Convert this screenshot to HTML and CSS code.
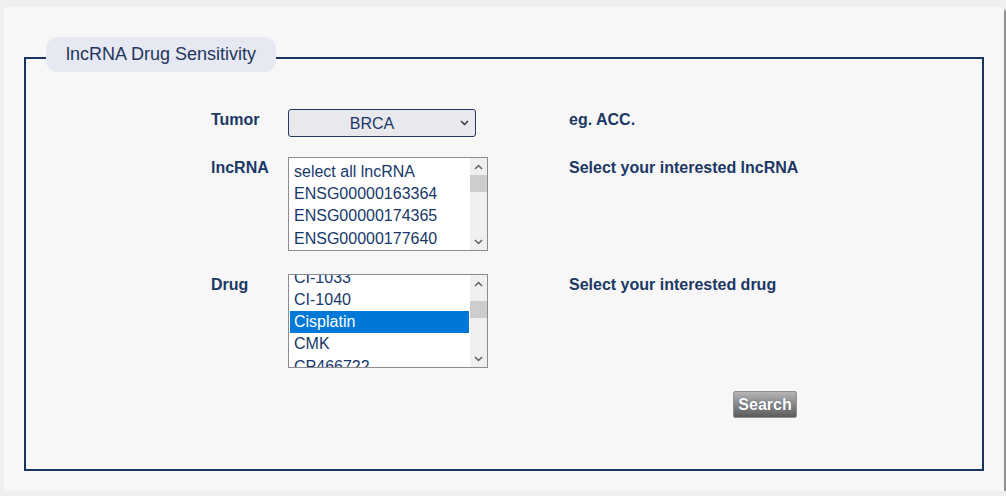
FILE: index.html
```html
<!DOCTYPE html>
<html lang="en">
<head>
    <meta charset="UTF-8">
    <meta name="viewport" content="width=device-width, initial-scale=1.0">
    <title>lncRNA Drug Sensitivity</title>
    <link rel="stylesheet" href="styles.css">
</head>
<body>
    <div class="panel">
        <fieldset class="search-box">
            <legend><span class="legend-pill">lncRNA Drug Sensitivity</span></legend>

            <form class="search-form" onsubmit="return false;">
                <!-- Tumor -->
                <div class="form-row row-tumor">
                    <label class="field-label" for="tumor">Tumor</label>
                    <div>
                        <select id="tumor" class="tumor-select">
                            <option>ACC</option>
                            <option>BLCA</option>
                            <option selected>BRCA</option>
                            <option>CESC</option>
                            <option>COAD</option>
                            <option>HNSC</option>
                            <option>KIRC</option>
                            <option>LUAD</option>
                        </select>
                    </div>
                    <p class="hint">eg. ACC.</p>
                </div>

                <!-- lncRNA -->
                <div class="form-row">
                    <label class="field-label" for="lncrna">lncRNA</label>
                    <div class="listbox-wrap">
                        <select id="lncrna" class="listbox" multiple size="4">
                            <option>select all lncRNA</option>
                            <option>ENSG00000163364</option>
                            <option>ENSG00000174365</option>
                            <option>ENSG00000177640</option>
                            <option>ENSG00000179818</option>
                            <option>ENSG00000196756</option>
                            <option>ENSG00000203875</option>
                            <option>ENSG00000204308</option>
                            <option>ENSG00000214548</option>
                            <option>ENSG00000215386</option>
                            <option>ENSG00000224078</option>
                            <option>ENSG00000225783</option>
                            <option>ENSG00000226950</option>
                            <option>ENSG00000228630</option>
                            <option>ENSG00000229807</option>
                            <option>ENSG00000230590</option>
                            <option>ENSG00000231412</option>
                            <option>ENSG00000234741</option>
                            <option>ENSG00000236824</option>
                            <option>ENSG00000245532</option>
                            <option>ENSG00000247556</option>
                            <option>ENSG00000251562</option>
                            <option>ENSG00000253352</option>
                            <option>ENSG00000255717</option>
                            <option>ENSG00000259976</option>
                            <option>ENSG00000260032</option>
                            <option>ENSG00000261026</option>
                            <option>ENSG00000267080</option>
                            <option>ENSG00000269821</option>
                            <option>ENSG00000270141</option>
                        </select>
                        <div class="scrollbar">
                            <span class="scroll-btn up"></span>
                            <span class="scroll-track"><span class="scroll-thumb"></span></span>
                            <span class="scroll-btn down"></span>
                        </div>
                    </div>
                    <p class="hint">Select your interested lncRNA</p>
                </div>

                <!-- Drug -->
                <div class="form-row">
                    <label class="field-label" for="drug">Drug</label>
                    <div class="listbox-wrap">
                        <select id="drug" class="listbox" multiple size="4">
                            <option>select all drug</option>
                            <option>AZD8055</option>
                            <option>Bexarotene</option>
                            <option>BI-2536</option>
                            <option>Bleomycin</option>
                            <option>Bortezomib</option>
                            <option>Bosutinib</option>
                            <option>Camptothecin</option>
                            <option>CEP-701</option>
                            <option>CHIR-99021</option>
                            <option>CI-1033</option>
                            <option>CI-1040</option>
                            <option selected>Cisplatin</option>
                            <option>CMK</option>
                            <option>CP466722</option>
                            <option>CP724714</option>
                            <option>Cyclopamine</option>
                            <option>Cytarabine</option>
                            <option>Dasatinib</option>
                            <option>DMOG</option>
                            <option>Docetaxel</option>
                            <option>Doxorubicin</option>
                            <option>Elesclomol</option>
                            <option>Embelin</option>
                            <option>Epothilone B</option>
                            <option>Erlotinib</option>
                            <option>Etoposide</option>
                            <option>Gefitinib</option>
                            <option>Gemcitabine</option>
                            <option>Imatinib</option>
                            <option>Lapatinib</option>
                            <option>Lenalidomide</option>
                            <option>Metformin</option>
                            <option>Methotrexate</option>
                            <option>Midostaurin</option>
                            <option>Mitomycin C</option>
                            <option>Nilotinib</option>
                            <option>Nutlin-3a</option>
                            <option>Paclitaxel</option>
                            <option>Pazopanib</option>
                            <option>Rapamycin</option>
                            <option>Roscovitine</option>
                            <option>Shikonin</option>
                            <option>Sorafenib</option>
                            <option>Sunitinib</option>
                            <option>Temsirolimus</option>
                            <option>Vinblastine</option>
                            <option>Vinorelbine</option>
                            <option>Vorinostat</option>
                            <option>ZM-447439</option>
                        </select>
                        <div class="scrollbar">
                            <span class="scroll-btn up"></span>
                            <span class="scroll-track"><span class="scroll-thumb"></span></span>
                            <span class="scroll-btn down"></span>
                        </div>
                    </div>
                    <p class="hint">Select your interested drug</p>
                </div>

                <div class="form-row row-submit">
                    <button type="submit" class="search-btn">Search</button>
                </div>
            </form>
        </fieldset>
    </div>

    <script>
        // Scrollbar next to each list follows the list's scroll position
        function syncThumb(list) {
            const track = list.parentElement.querySelector('.scroll-track');
            const thumb = track.querySelector('.scroll-thumb');
            const range = list.scrollHeight - list.clientHeight;
            const room = track.clientHeight - thumb.offsetHeight;
            const top = range > 0 ? Math.round(list.scrollTop / range * room) : 0;
            thumb.style.marginTop = top + 'px';
        }

        const lists = document.querySelectorAll('.listbox');

        lists.forEach((list) => {
            list.addEventListener('scroll', () => syncThumb(list));
        });

        window.addEventListener('load', () => {
            // keep the chosen drug on the third visible row
            document.getElementById('drug').scrollTop = 233;
            lists.forEach(syncThumb);
        });
    </script>
</body>
</html>
```

FILE: styles.css
```css
body {
    margin: 0;
    padding: 7px 2px 0 4px;
    background-color: #efefef;
    font-family: "Liberation Sans", Arial, sans-serif;
    color: #1b3864;
}

.panel {
    width: 960px;
    padding: 30px 20px 20px 20px;
    background-color: #f7f7f7;
    box-shadow: 3px 3px 2px #8e8e8e;
}

/* Fieldset box */
.search-box {
    margin: 0;
    padding: 30px 20px 51px 20px;
    border: 2px solid #1b3563;
}

.search-box legend {
    padding: 0 0 7px 0;
}

.legend-pill {
    display: block;
    padding: 0 20px;
    height: 35px;
    line-height: 35px;
    background-color: #e6e9f1;
    border-radius: 12px;
    font-size: 18px;
    color: #1f3560;
}

.search-form {
    width: 586px;
    margin: 0 auto;
}

.form-row {
    display: grid;
    grid-template-columns: 77px 281px 1fr;
    align-items: start;
    margin-bottom: 23px;
}

.row-tumor {
    margin-bottom: 20px;
}

.row-submit {
    margin-bottom: 0;
    display: flex;
    justify-content: flex-end;
}

.field-label {
    padding-top: 2px;
    font-size: 16px;
    font-weight: bold;
    color: #1b3864;
}

.hint {
    margin: 0;
    padding-top: 2px;
    font-size: 16px;
    font-weight: bold;
    color: #1b3864;
    white-space: nowrap;
}

/* Tumor dropdown */
.tumor-select {
    -webkit-appearance: none;
    appearance: none;
    width: 188px;
    height: 28px;
    padding: 0 20px 0 0;
    border: 1px solid #24395f;
    border-radius: 3px;
    background-color: #e9e9ed;
    background-image: url("data:image/svg+xml,%3Csvg xmlns='http://www.w3.org/2000/svg' width='9' height='6' viewBox='0 0 9 6'%3E%3Cpath d='M1 1l3.5 3.5L8 1' fill='none' stroke='%23303030' stroke-width='1.4'/%3E%3C/svg%3E");
    background-repeat: no-repeat;
    background-position: right 6px center;
    font-family: "Liberation Sans", Arial, sans-serif;
    font-size: 16px;
    color: #17386a;
    text-align-last: center;
}

/* Multi-select lists */
.listbox-wrap {
    display: flex;
    width: 198px;
    height: 92px;
    border: 1px solid #8b8b93;
    background-color: #fff;
}

.listbox {
    display: block;
    width: 181px;
    height: 92px;
    padding: 3px 1px 1px 1px;
    border: none;
    background-color: #fff;
    font-family: "Liberation Sans", Arial, sans-serif;
    font-size: 16px;
    color: #17386a;
    outline: none;
    scrollbar-width: none;
}

.listbox option {
    padding: 2px 5px 1px 4px;
    color: #17386a;
}

.listbox option:checked {
    background: #0078d7 linear-gradient(#0078d7, #0078d7);
    color: #fff;
}

.scrollbar {
    display: flex;
    flex-direction: column;
    width: 17px;
    background-color: #f0f0f0;
}

.scroll-btn {
    height: 17px;
    flex: none;
    background-repeat: no-repeat;
    background-position: center;
}

.scroll-btn.up {
    background-image: url("data:image/svg+xml,%3Csvg xmlns='http://www.w3.org/2000/svg' width='9' height='6' viewBox='0 0 9 6'%3E%3Cpath d='M1 5l3.5-3.5L8 5' fill='none' stroke='%23606060' stroke-width='1.5'/%3E%3C/svg%3E");
}

.scroll-btn.down {
    background-image: url("data:image/svg+xml,%3Csvg xmlns='http://www.w3.org/2000/svg' width='9' height='6' viewBox='0 0 9 6'%3E%3Cpath d='M1 1l3.5 3.5L8 1' fill='none' stroke='%23606060' stroke-width='1.5'/%3E%3C/svg%3E");
}

.scroll-track {
    flex: 1;
    display: flex;
    flex-direction: column;
}

.scroll-thumb {
    height: 17px;
    flex: none;
    background-color: #cdcdcd;
}

/* Search button */
.search-btn {
    width: 64px;
    height: 27px;
    padding: 0;
    border: 1px solid #8f8f8f;
    border-radius: 2px;
    background: linear-gradient(#b4b4b4, #5b5b5b);
    font-family: "Liberation Sans", Arial, sans-serif;
    font-size: 16px;
    font-weight: bold;
    color: #fff;
    text-shadow: 0 0 1px #3a4a6a;
    cursor: pointer;
}

.search-btn:hover {
    background: linear-gradient(#9a9a9a, #444);
}
```
